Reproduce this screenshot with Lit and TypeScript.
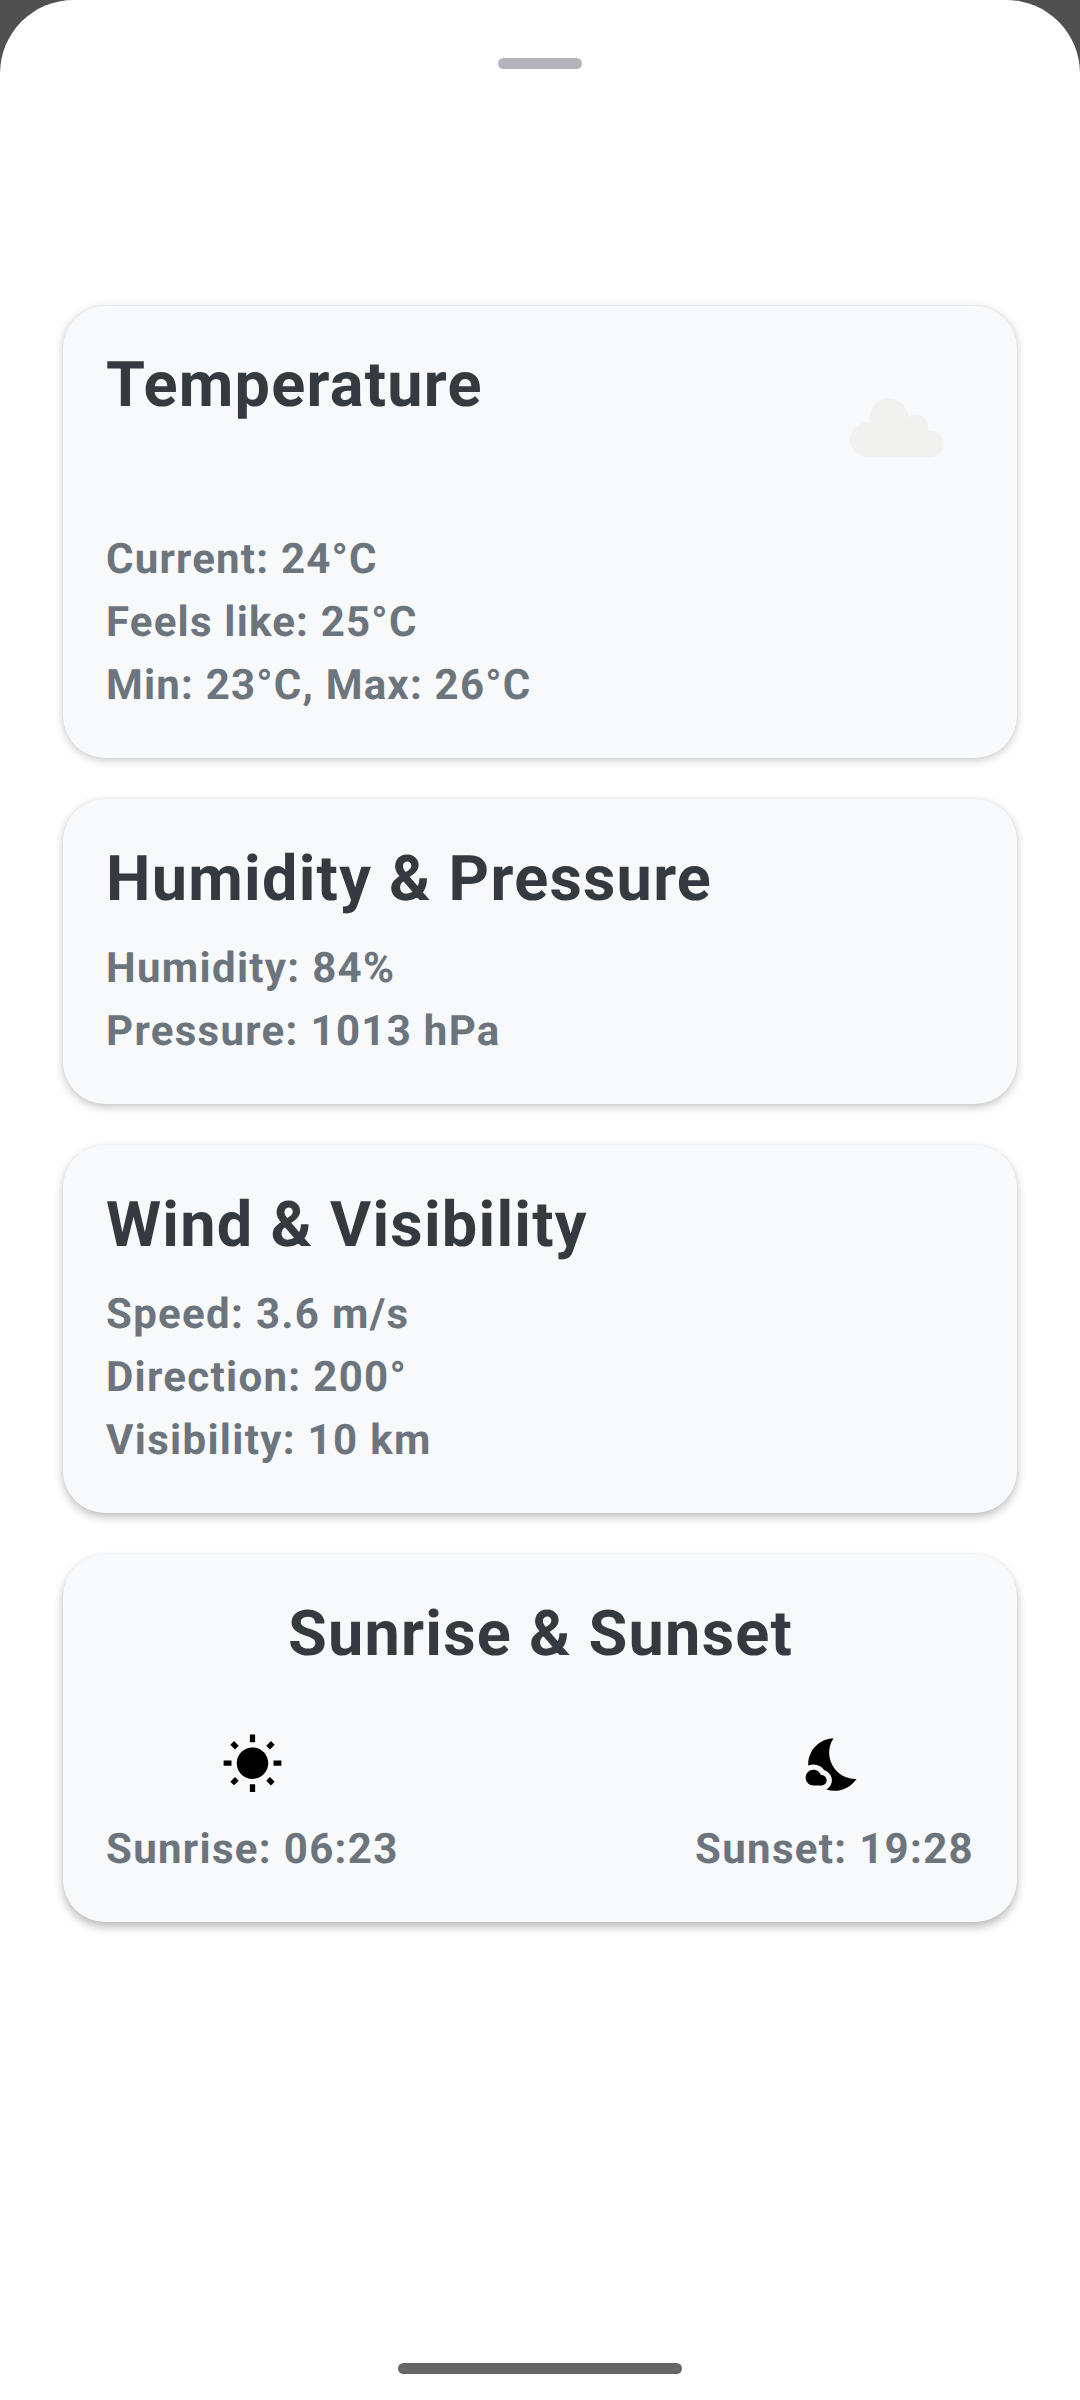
import { LitElement, html, css } from "lit";
import { customElement, property } from "lit/decorators.js";

@customElement("weather-card")
class WeatherCard extends LitElement {
  @property() heading = "";
  static styles = css`
    :host {
      display: flex;
      flex-direction: column;
      box-sizing: border-box;
      padding: 43px 42px 41px 43px;
      border-radius: 42px;
      background: #f8f9fb;
      color: #6c757d;
      font: 700 42px/63px Roboto, sans-serif;
      letter-spacing: var(--body-spacing, 1.3125px);
      text-rendering: geometricPrecision;
      box-shadow: 0 var(--drop, 2px) 10px rgba(0, 0, 0, var(--shade, 0.16)), 0 0 2px rgba(0, 0, 0, 0.06);
    }
    .head {
      display: flex;
      justify-content: space-between;
      align-items: flex-start;
      padding-top: var(--head-top, 1px);
      margin-bottom: var(--head-bottom, 20px);
    }
    .title {
      margin: 0;
      flex: 1;
      color: #343a40;
      font-size: 63px;
      font-weight: 700;
      line-height: 74px;
      letter-spacing: 1.24px;
      text-align: var(--title-align, left);
    }
  `;
  render() {
    return html`
      <div class="head">
        <h2 class="title">${this.heading}</h2>
        <slot name="icon"></slot>
      </div>
      <slot></slot>
    `;
  }
}

@customElement("app-root")
class AppRoot extends LitElement {
  static styles = css`
    :host {
      display: block;
      height: 2400px;
      background: #505050;
    }
    .sheet {
      box-sizing: border-box;
      height: 2400px;
      padding: 58px 63px 26px;
      border-radius: 73.5px 73.5px 0 0;
      background: #fff;
      display: flex;
      flex-direction: column;
      align-items: center;
    }
    .handle {
      width: 84px;
      height: 11px;
      border-radius: 6px;
      background: #b5b3b9;
    }
    .cards {
      width: 954px;
      margin-top: 237px;
      display: flex;
      flex-direction: column;
      gap: 41px;
      flex: 1;
    }
    .c1 { --drop: 2px; --shade: 0.22; --head-top: 0px; --head-bottom: 21px; --body-spacing: 1.2px; }
    .c2 { --drop: 3px; --shade: 0.23; }
    .c3 { --drop: 4px; --shade: 0.25; }
    .c4 { --drop: 5px; --shade: 0.27; --title-align: center; }
    .cloud {
      display: block;
      width: 158px;
      height: 158px;
      fill: #f1f1ef;
    }
    .times {
      display: flex;
      justify-content: space-between;
      margin: 41px 1px 0 0;
    }
    .time {
      display: flex;
      flex-direction: column;
      align-items: center;
      gap: 22px;
    }
    .glyph {
      display: block;
      width: 63px;
      height: 63px;
      fill: #000;
    }
    .nav {
      width: 284px;
      height: 11px;
      border-radius: 6px;
      background: #666;
    }
  `;

  render() {
    return html`
      <div class="sheet">
        <div class="handle"></div>
        <div class="cards">
          <weather-card class="c1" heading="Temperature">
            <svg slot="icon" class="cloud" viewBox="-3 3 474 474">
              <circle cx="148" cy="275.5" r="52" />
              <circle cx="213" cy="211.5" r="59" />
              <circle cx="296" cy="234.5" r="34" />
              <circle cx="337" cy="287.5" r="40" />
              <path d="M148 230H320L337 260V327.5H148Z" />
            </svg>
            <div>Current: 24°C</div>
            <div>Feels like: 25°C</div>
            <div>Min: 23°C, Max: 26°C</div>
          </weather-card>
          <weather-card class="c2" heading="Humidity &amp; Pressure">
            <div>Humidity: 84%</div>
            <div>Pressure: 1013 hPa</div>
          </weather-card>
          <weather-card class="c3" heading="Wind &amp; Visibility">
            <div>Speed: 3.6 m/s</div>
            <div>Direction: 200°</div>
            <div>Visibility: 10 km</div>
          </weather-card>
          <weather-card class="c4" heading="Sunrise &amp; Sunset">
            <div class="times">
              <div class="time">
                <svg class="glyph" viewBox="0 0 24 24">
                  <path d="M6.76 4.84l-1.8-1.79-1.41 1.41 1.79 1.79 1.42-1.41zM4 10.5H1v2h3v-2zm9-9.95h-2V3.5h2V.55zm7.45 3.91l-1.41-1.41-1.79 1.79 1.41 1.41 1.79-1.79zm-3.21 13.7l1.79 1.8 1.41-1.41-1.8-1.79-1.4 1.4zM20 10.5v2h3v-2h-3zm-8-5c-3.31 0-6 2.69-6 6s2.69 6 6 6 6-2.69 6-6-2.69-6-6-6zm-1 16.95h2V19.5h-2v2.95zm-7.45-3.91l1.41 1.41 1.79-1.8-1.41-1.41-1.79 1.8z" />
                </svg>
                <div>Sunrise: 06:23</div>
              </div>
              <div class="time">
                <svg class="glyph" viewBox="0 0 24 24">
                  <path d="M11.1 12.08C8.77 7.57 10.6 3.6 11.63 2.01 6.27 2.2 1.98 6.59 1.98 12c0 .14.02.28.02.42C2.62 12.15 3.29 12 4 12c1.66 0 3.18.83 4.1 2.15C9.77 14.63 11 16.17 11 18c0 1.52-.87 2.83-2.12 3.51.98.32 2.03.5 3.11.5 3.5 0 6.58-1.8 8.37-4.52-2.36.23-6.98-.97-9.26-5.41zM7 16h-.18C6.4 14.84 5.3 14 4 14c-1.66 0-3 1.34-3 3s1.34 3 3 3h3c1.1 0 2-.9 2-2s-.9-2-2-2z" />
                </svg>
                <div>Sunset: 19:28</div>
              </div>
            </div>
          </weather-card>
        </div>
        <div class="nav"></div>
      </div>
    `;
  }
}
